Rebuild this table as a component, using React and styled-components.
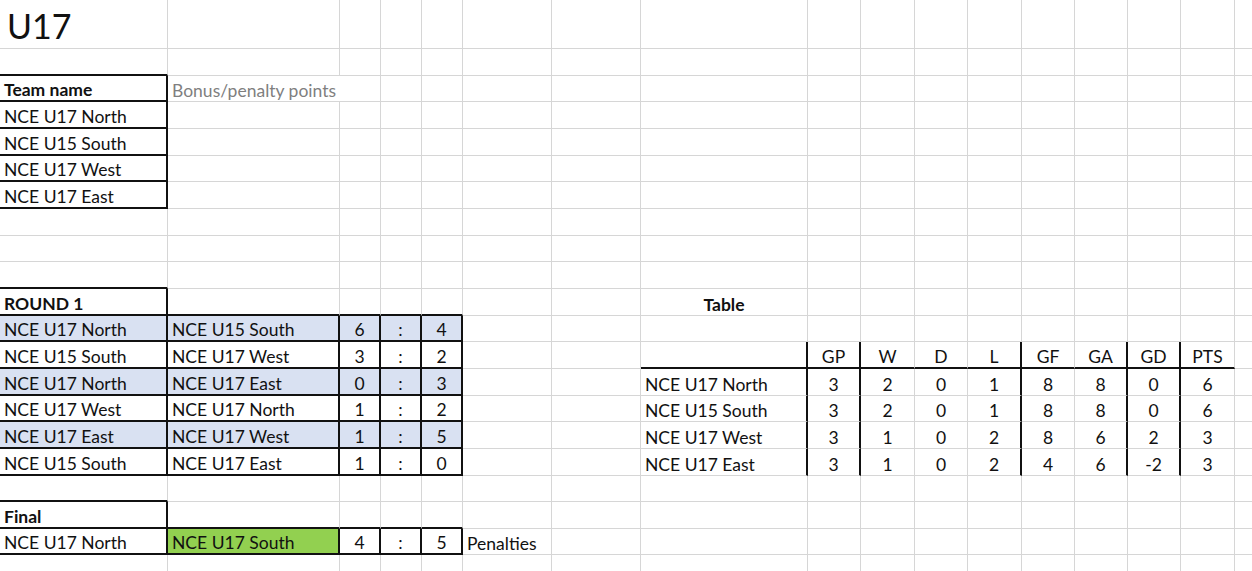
import React from "react";
import styled, { createGlobalStyle } from "styled-components";

const COLS = [168, 172, 41, 41, 41, 89, 89, 167, 53, 54, 53, 54, 53, 53, 53, 54, 60];
const ROW_COUNT = 21;

const GRID = "#d6d6d6";
const INK = "#111";
const BLUE = "#d9e1f2";
const GREEN = "#92d050";

const teams = ["NCE U17 North", "NCE U15 South", "NCE U17 West", "NCE U17 East"];

const matches = [
  ["NCE U17 North", "NCE U15 South", 6, 4],
  ["NCE U15 South", "NCE U17 West", 3, 2],
  ["NCE U17 North", "NCE U17 East", 0, 3],
  ["NCE U17 West", "NCE U17 North", 1, 2],
  ["NCE U17 East", "NCE U17 West", 1, 5],
  ["NCE U15 South", "NCE U17 East", 1, 0],
];

const headers = ["GP", "W", "D", "L", "GF", "GA", "GD", "PTS"];

const standings = [
  ["NCE U17 North", 3, 2, 0, 1, 8, 8, 0, 6],
  ["NCE U15 South", 3, 2, 0, 1, 8, 8, 0, 6],
  ["NCE U17 West", 3, 1, 0, 2, 8, 6, 2, 3],
  ["NCE U17 East", 3, 1, 0, 2, 4, 6, -2, 3],
];

// builds the cell contents, keyed by "row-col"
function buildCells() {
  const cells = {};
  const put = (r, c, text, opts = {}) => (cells[`${r}-${c}`] = { text, ...opts });

  put(0, 0, "U17", { title: true });
  put(2, 0, "Team name", { bold: true });
  put(2, 1, "Bonus/penalty points", { muted: true, span: 2 });
  teams.forEach((t, i) => put(3 + i, 0, t));

  put(10, 0, "ROUND 1", { bold: true });
  matches.forEach(([home, away, a, b], i) => {
    const r = 11 + i;
    const bg = i % 2 === 0 ? BLUE : null;
    put(r, 0, home, { bg });
    put(r, 1, away, { bg });
    put(r, 2, a, { bg, align: "center" });
    put(r, 3, ":", { bg, align: "center" });
    put(r, 4, b, { bg, align: "center" });
  });

  put(18, 0, "Final", { bold: true });
  put(19, 0, "NCE U17 North");
  put(19, 1, "NCE U17 South", { bg: GREEN });
  put(19, 2, 4, { align: "center" });
  put(19, 3, ":", { align: "center" });
  put(19, 4, 5, { align: "center" });
  put(19, 5, "Penalties");

  put(10, 7, "Table", { bold: true, align: "center" });
  headers.forEach((h, i) => put(12, 8 + i, h, { align: "center" }));
  standings.forEach(([name, ...vals], i) => {
    put(13 + i, 7, name);
    vals.forEach((v, j) => put(13 + i, 8 + j, v, { align: "center" }));
  });

  return cells;
}

const inRange = (v, a, b) => v >= a && v <= b;

// black line under row r at column c
const hBlack = (r, c) =>
  (c === 0 && (inRange(r, 1, 6) || r === 9 || r === 17)) ||
  (inRange(c, 0, 4) && (inRange(r, 10, 16) || inRange(r, 18, 19))) ||
  (inRange(c, 7, 15) && r === 12);

// black line right of column c at row r
const vBlack = (r, c) =>
  (c === 0 && (inRange(r, 2, 6) || inRange(r, 10, 16) || inRange(r, 18, 19))) ||
  (inRange(c, 1, 4) && (inRange(r, 11, 16) || r === 19)) ||
  ([7, 8, 11, 13, 14].includes(c) && inRange(r, 12, 16));

export default function App() {
  const cells = buildCells();
  const out = [];

  for (let r = 0; r < ROW_COUNT; r++) {
    for (let c = 0; c < COLS.length; c++) {
      if (r === 2 && c === 2) continue; // covered by the spanning bonus cell
      const cell = cells[`${r}-${c}`] || {};
      const lastCol = cell.span ? c + cell.span - 1 : c;
      out.push(
        <Cell
          key={`${r}-${c}`}
          $span={cell.span}
          $right={vBlack(r, lastCol)}
          $bottom={hBlack(r, c)}
          $bg={cell.bg}
          $bold={cell.bold}
          $muted={cell.muted}
          $title={cell.title}
          $align={cell.align}
        >
          {cell.text}
        </Cell>
      );
    }
  }

  return (
    <>
      <GlobalStyle />
      <Sheet>{out}</Sheet>
    </>
  );
}

/****************** styles ******************/

const GlobalStyle = createGlobalStyle`
  html, body {
    margin: 0;
    padding: 0;
    background: #fff;
    overflow: hidden;
  }
  body {
    font-family: Lato, "Open Sans", sans-serif;
    color: ${INK};
  }
`;

const Sheet = styled.div`
  display: grid;
  grid-template-columns: ${COLS.map((w) => `${w}px`).join(" ")};
  grid-template-rows: 49px repeat(${ROW_COUNT - 1}, 26.66px);
  width: 1252px;
  height: 571px;
  overflow: hidden;
`;

const Cell = styled.div`
  box-sizing: border-box;
  grid-column: span ${(p) => p.$span || 1};
  display: flex;
  align-items: flex-end;
  justify-content: ${(p) => (p.$align === "center" ? "center" : "flex-start")};
  padding: 0 ${(p) => (p.$align === "center" ? "0" : "5px")} ${(p) => (p.$title ? "1px" : "0")} ${(p) => (p.$title ? "7px" : p.$align === "center" ? "0" : "4px")};
  background: ${(p) => p.$bg || "#fff"};
  border-right: ${(p) => (p.$right ? `2px solid ${INK}` : `1px solid ${GRID}`)};
  border-bottom: ${(p) => (p.$bottom ? `2px solid ${INK}` : `1px solid ${GRID}`)};
  font-size: ${(p) => (p.$title ? "34px" : "17.5px")};
  font-weight: ${(p) => (p.$bold ? 700 : 400)};
  color: ${(p) => (p.$muted ? "#7f7f7f" : INK)};
  line-height: 1.2;
  white-space: nowrap;
  overflow: hidden;
`;
